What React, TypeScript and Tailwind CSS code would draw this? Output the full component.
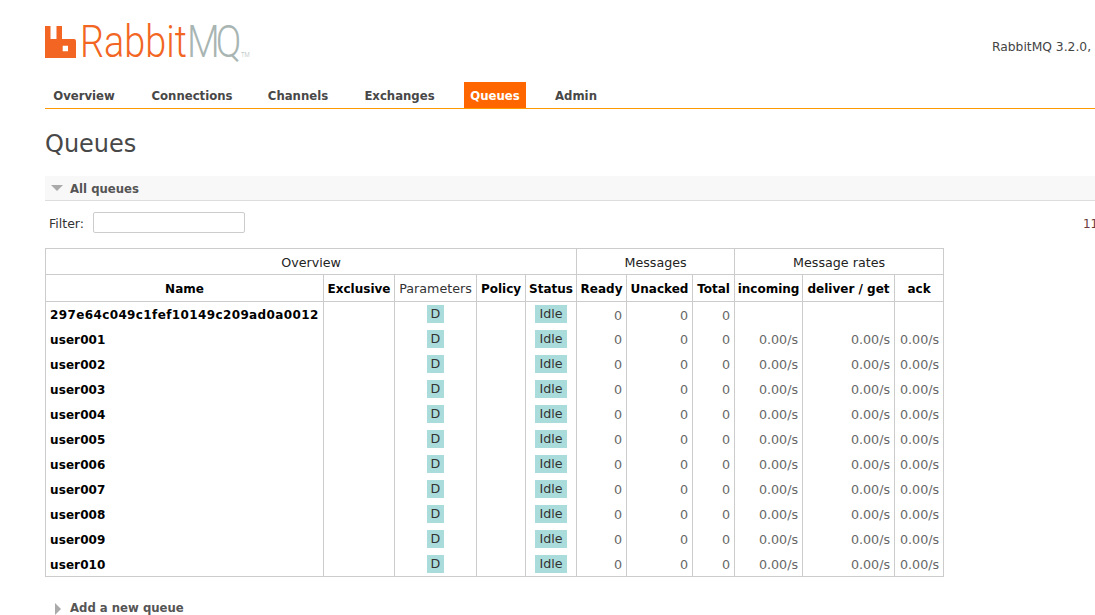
const NAV = [
  { label: 'Overview', width: 'w-[78px]' },
  { label: 'Connections', width: 'w-[94px]' },
  { label: 'Channels', width: 'w-[74px]' },
  { label: 'Exchanges', width: 'w-[85px]' },
  { label: 'Queues', width: 'w-[62px]' },
  { label: 'Admin', width: 'w-[56px]' },
];
const USERS = ['user001', 'user002', 'user003', 'user004', 'user005', 'user006', 'user007', 'user008', 'user009', 'user010'];

const COLS = [278, 71, 82, 49, 51, 50, 66, 42, 68, 92, 49];
const th = 'border border-[#ccc] font-bold text-black text-center px-0 h-[27px] pt-[1px] whitespace-nowrap';
const group = 'border border-[#ccc] font-normal text-[12.7px] text-[#222] text-center h-[26px] pt-[2px]';
const num = 'border-x border-[#ccc] text-right pr-[4px] pt-[2px] text-[12.7px] text-[#666] whitespace-nowrap';
const tag = 'inline-block bg-[#aadcdc] px-[4px] text-[12.7px] leading-[18px] text-[#333]';

function Row({ name, rates }: { name: string; rates: boolean }) {
  return (
    <tr className="h-[25px]">
      <td className={'border-l border-[#ccc] pl-[4px] pt-[2px] font-bold text-black whitespace-nowrap' + (rates ? ' tracking-[0.1px]' : ' tracking-[0.38px]')}>{name}</td>
      <td className="border-l border-[#ccc]" />
      <td className="border-l border-[#ccc] text-center"><span className={tag}>D</span></td>
      <td className="border-l border-[#ccc]" />
      <td className="border-l border-[#ccc] text-center"><span className={tag}>Idle</span></td>
      <td className={num}>0</td>
      <td className={num}>0</td>
      <td className={num}>0</td>
      <td className={num}>{rates ? '0.00/s' : ''}</td>
      <td className={num}>{rates ? '0.00/s' : ''}</td>
      <td className={num}>{rates ? '0.00/s' : ''}</td>
    </tr>
  );
}

export default function App() {
  return (
    <div className="w-[1095px] h-[615px] overflow-hidden bg-white pl-[45px] font-['DejaVu_Sans',sans-serif] text-[12px] text-[#484848]">
      <header className="flex h-[82px] items-start justify-between">
        <div className="mt-[26px] flex items-start">
          <svg width="31" height="32" viewBox="0 0 31 32" className="shrink-0">
            <path fill="#f26522" fillRule="evenodd" d="M0 0h5.5v13h6V0H17v13h12a2 2 0 0 1 2 2v17H0zM17.7 19.7v5.6H23v-5.6z" />
          </svg>
          <div className="-mt-[10px] ml-[4px] flex origin-left scale-x-[0.84] items-baseline whitespace-nowrap font-['Roboto',sans-serif] text-[45px] font-light leading-[52px]">
            <span className="text-[#f26522]">Rabbit</span>
            <span className="text-[#a8b5b2] tracking-[-4.5px]">MQ</span>
            <span className="ml-[4px] text-[7px] leading-none text-[#a8b5b2]">TM</span>
          </div>
        </div>
        <div className="mt-[39px] w-[103px] shrink-0 overflow-hidden whitespace-nowrap text-[12.3px] leading-[16px] text-[#444]">RabbitMQ 3.2.0,</div>
      </header>

      <nav className="flex h-[27px] gap-[22px] border-b border-[#ff9900]">
        {NAV.map((item) => (
          <a
            key={item.label}
            className={
              item.label === 'Queues'
                ? item.width + ' h-[26px] bg-[#ff6600] pt-[1px] text-center text-[11.7px] font-bold leading-[27px] text-white'
                : item.width + ' h-[26px] pt-[1px] text-center text-[11.7px] font-bold leading-[27px] text-[#484848]'
            }
          >
            {item.label}
          </a>
        ))}
      </nav>

      <h1 className="mt-[18px] text-[24px] font-normal leading-[34px] text-[#484848]">Queues</h1>

      <div className="mt-[15px] flex h-[25px] items-center border-b border-[#ddd] bg-[#f8f8f8] pl-[6px]">
        <svg width="12" height="6" viewBox="0 0 12 6" className="shrink-0"><path fill="#aaa" d="M0 0h12L6 6z" /></svg>
        <span className="ml-[7px] pt-[4px] text-[11.7px] font-bold text-[#555]">All queues</span>
      </div>

      <div className="mt-[11px] flex h-[22px] items-center">
        <label className="ml-[4px] pt-[2px] text-[12.5px] text-[#333]">Filter:</label>
        <input className="ml-[9px] -mt-[1px] h-[21px] w-[152px] rounded-[2px] border border-[#ccc] bg-white" />
        <span className="ml-[838px] pt-[2px] whitespace-nowrap text-[#6b3a3a]">11</span>
      </div>

      <table className="mt-[14px] w-[899px] table-fixed border-collapse border border-[#ccc]">
        <colgroup>
          {COLS.map((w, i) => (
            <col key={i} style={{ width: w }} />
          ))}
        </colgroup>
        <thead>
          <tr>
            <th colSpan={5} className={group}>Overview</th>
            <th colSpan={3} className={group}>Messages</th>
            <th colSpan={3} className={group}>Message rates</th>
          </tr>
          <tr>
            <th className={th}>Name</th>
            <th className={th}>Exclusive</th>
            <th className={th + ' !font-normal !text-[12.7px] !text-[#333]'}>Parameters</th>
            <th className={th}>Policy</th>
            <th className={th}>Status</th>
            <th className={th}>Ready</th>
            <th className={th}>Unacked</th>
            <th className={th}>Total</th>
            <th className={th}>incoming</th>
            <th className={th}>deliver / get</th>
            <th className={th}>ack</th>
          </tr>
        </thead>
        <tbody>
          <Row name="297e64c049c1fef10149c209ad0a0012" rates={false} />
          {USERS.map((u) => (
            <Row key={u} name={u} rates />
          ))}
        </tbody>
      </table>

      <div className="mt-[24px] flex h-[16px] items-center pl-[10px]">
        <svg width="6" height="12" viewBox="0 0 6 12" className="shrink-0"><path fill="#aaa" d="M0 0l6 6-6 6z" /></svg>
        <span className="ml-[9px] text-[11.7px] font-bold text-[#555]">Add a new queue</span>
      </div>
    </div>
  );
}
